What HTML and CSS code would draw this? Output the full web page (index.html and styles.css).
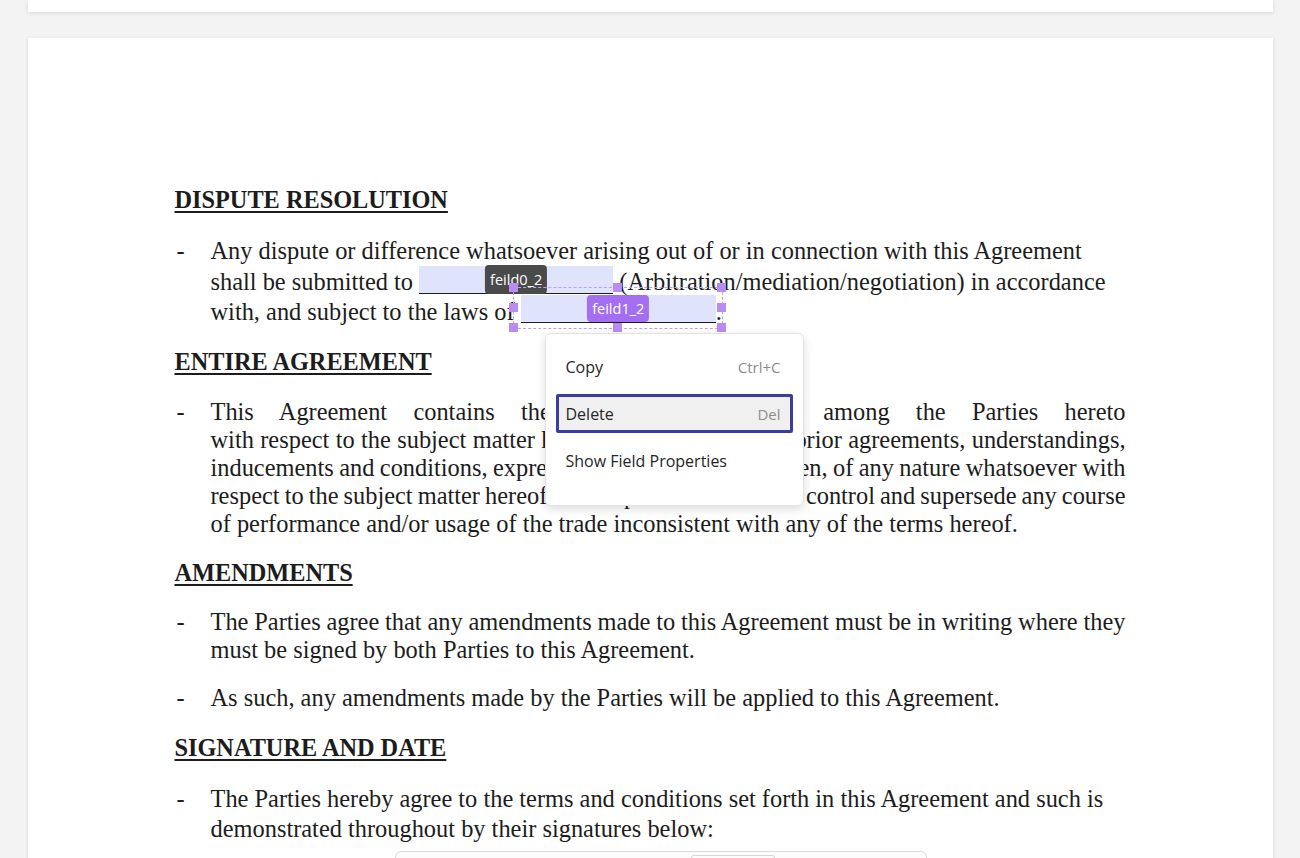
FILE: index.html
```html
<html>
<head>
    <link rel="stylesheet" href="styles.css">
</head>
<body>
    <div class="viewer">
        <div class="page page-prev"></div>

        <div class="page page-current">
            <h2 class="doc-heading">DISPUTE RESOLUTION</h2>
            <div class="clause loose">
                <span class="dash">-</span>
                <div class="clause-text">
                    Any dispute or difference whatsoever arising out of or in connection with this Agreement<br>
                    shall be submitted to <span class="field"><span class="tag tag-dark">feild0_2</span></span> (Arbitration/mediation/negotiation) in accordance<br>
                    with, and subject to the laws of <span class="field field-selected"><span class="selection"><i class="handle h-tl"></i><i class="handle h-tc"></i><i class="handle h-tr"></i><i class="handle h-ml"></i><i class="handle h-mr"></i><i class="handle h-bl"></i><i class="handle h-bc"></i><i class="handle h-br"></i></span><span class="tag tag-purple">feild1_2</span></span>.
                </div>
            </div>

            <h2 class="doc-heading">ENTIRE AGREEMENT</h2>
            <div class="clause">
                <span class="dash">-</span>
                <div class="clause-text">
                    <span class="jline">This Agreement contains the entire understanding among the Parties hereto</span>
                    <span class="jline">with respect to the subject matter hereof and supersedes all prior agreements, understandings,</span>
                    <span class="jline">inducements and conditions, express or implied, oral or written, of any nature whatsoever with</span>
                    <span class="jline">respect to the subject matter hereof. The express terms hereof control and supersede any course</span>
                    <span class="line">of performance and/or usage of the trade inconsistent with any of the terms hereof.</span>
                </div>
            </div>

            <h2 class="doc-heading tight">AMENDMENTS</h2>
            <div class="clause">
                <span class="dash">-</span>
                <div class="clause-text">
                    <span class="jline">The Parties agree that any amendments made to this Agreement must be in writing where they</span>
                    <span class="line">must be signed by both Parties to this Agreement.</span>
                </div>
            </div>
            <div class="clause spaced">
                <span class="dash">-</span>
                <div class="clause-text">As such, any amendments made by the Parties will be applied to this Agreement.</div>
            </div>

            <h2 class="doc-heading">SIGNATURE AND DATE</h2>
            <div class="clause sig">
                <span class="dash">-</span>
                <div class="clause-text">
                    The Parties hereby agree to the terms and conditions set forth in this Agreement and such is<br>
                    demonstrated throughout by their signatures below:
                </div>
            </div>

            <div class="sign-table">
                <div class="sign-tab"></div>
            </div>

            <!-- right click menu on feild1_2 -->
            <div class="context-menu">
                <div class="menu-item"><span>Copy</span><span class="shortcut">Ctrl+C</span></div>
                <div class="menu-item active"><span>Delete</span><span class="shortcut">Del</span></div>
                <div class="menu-item"><span>Show Field Properties</span></div>
            </div>
        </div>
    </div>
</body>
</html>
```

FILE: styles.css
```css
body {
    margin: 0;
    background-color: #f3f3f3;
    overflow: hidden;
}

.viewer {
    display: flex;
    flex-direction: column;
    align-items: center;
    gap: 26px;
}

.page {
    width: 1245px;
    background-color: #fff;
    box-shadow: 0 1px 4px rgba(0, 0, 0, 0.12);
    box-sizing: border-box;
}

.page-prev {
    height: 12px;
}

.page-current {
    position: relative;
    min-height: 900px;
    padding: 147px 147px 0 147px;
    font-family: "Liberation Serif", "Times New Roman", serif;
    color: #1c1c1c;
}

.doc-heading {
    margin: 0 0 21px 0;
    font-size: 24.3px;
    line-height: 30px;
    font-weight: bold;
    text-decoration: underline;
    text-decoration-thickness: 2px;
    text-underline-offset: 3px;
}

.doc-heading.tight {
    margin-bottom: 20px;
}

.clause {
    display: flex;
    margin-bottom: 20px;
    font-size: 24.4px;
    line-height: 28px;
}

.clause.loose {
    line-height: 30.5px;
    margin-bottom: 19.5px;
}

.clause.spaced {
    margin-bottom: 21px;
}

.clause.sig {
    line-height: 30px;
    margin-bottom: 7px;
}

.dash {
    width: 36px;
    flex-shrink: 0;
    padding-left: 2px;
    box-sizing: border-box;
}

.clause-text {
    flex: 1;
}

.jline {
    display: block;
    white-space: nowrap;
    word-spacing: -2px;
    text-align: justify;
    text-align-last: justify;
}

.line {
    display: block;
}

/* form fields */
.field {
    position: relative;
    display: inline-block;
    width: 194px;
    height: 27px;
    margin-top: -4px;
    background-color: #dfe3fc;
    border-bottom: 1px solid #1c1c1c;
    vertical-align: -4px;
}

.field-selected {
    width: 195px;
    vertical-align: -3px;
    z-index: 2;
}

.tag {
    position: absolute;
    top: 0;
    left: 50%;
    transform: translateX(-50%);
    height: 28px;
    padding: 0 5px;
    border-radius: 4px;
    font-family: "Open Sans", sans-serif;
    font-size: 14.5px;
    line-height: 28px;
    color: #fff;
    white-space: nowrap;
}

.tag-dark {
    background-color: #4a4a4a;
    height: 29px;
    line-height: 29px;
    top: -1px;
}

.tag-purple {
    background-color: #a46ef0;
    height: 27px;
    line-height: 27px;
}

.selection {
    position: absolute;
    top: -8px;
    left: -8px;
    right: -7px;
    bottom: -7px;
    border: 1.5px dashed #b9a2ea;
}

.handle {
    position: absolute;
    width: 9px;
    height: 9px;
    background-color: #b98cf3;
    margin: -5px 0 0 -5px;
}

.h-tl { top: 0; left: 0; }
.h-tc { top: 0; left: 50%; }
.h-tr { top: 0; left: 100%; }
.h-ml { top: 50%; left: 0; }
.h-mr { top: 50%; left: 100%; }
.h-bl { top: 100%; left: 0; }
.h-bc { top: 100%; left: 50%; }
.h-br { top: 100%; left: 100%; }

/* context menu */
.context-menu {
    position: absolute;
    left: 517px;
    top: 295px;
    width: 259px;
    padding: 13px 10px 25px 10px;
    box-sizing: border-box;
    background-color: #fff;
    border: 1px solid #e3e3e3;
    border-radius: 6px;
    box-shadow: 0 3px 10px rgba(0, 0, 0, 0.14);
    font-family: "Open Sans", sans-serif;
    font-size: 16px;
    color: #262626;
    z-index: 5;
    display: flex;
    flex-direction: column;
    gap: 8px;
}

.menu-item {
    display: flex;
    justify-content: space-between;
    align-items: center;
    height: 39px;
    padding: 0 9px 0 10px;
    box-sizing: border-box;
    border: 3px solid transparent;
    border-radius: 2px;
}

.menu-item.active {
    background-color: #f0f0f0;
    border-color: #3a3e9e;
}

.menu-item span:first-child {
    margin-left: -3px;
}

.shortcut {
    color: #8c8c8c;
    font-size: 15px;
}

/* signature table peeking at the bottom */
.sign-table {
    margin-left: 220px;
    width: 530px;
    height: 30px;
    border: 1px solid #d8d8d8;
    border-radius: 6px 6px 0 0;
    background-color: #fcfcfc;
    position: relative;
}

.sign-tab {
    margin: 3px 0 0 295px;
    width: 82px;
    height: 20px;
    border: 1px solid #d8d8d8;
    border-bottom: none;
    border-radius: 3px 3px 0 0;
}
```
